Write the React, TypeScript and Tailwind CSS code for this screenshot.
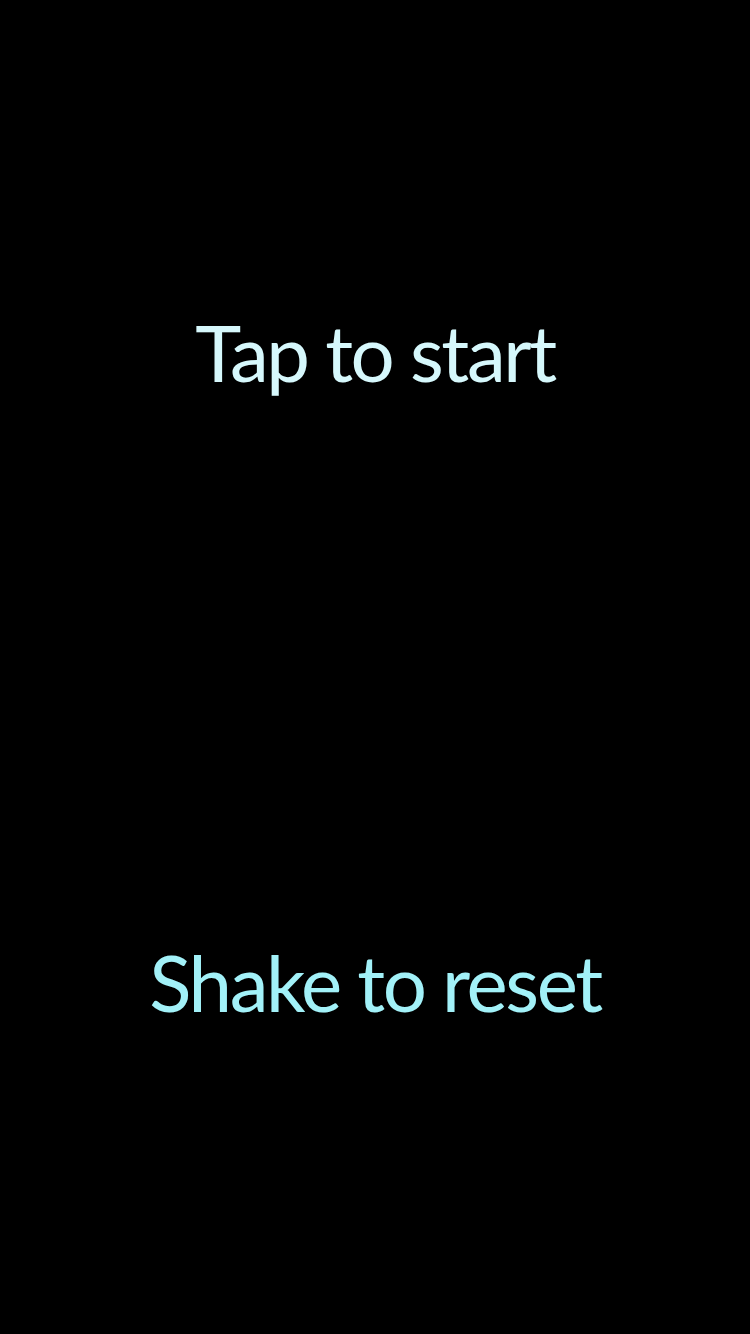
export default function App() {
    return (
        <div className="w-[750px] h-[1334px] bg-black flex flex-col items-center" style={{ fontFamily: "Lato, 'Open Sans', sans-serif" }}>
            <p className="mt-[304px] text-[78px] leading-[96px] text-[#d6f8fc] tracking-[-2.4px]">Tap to start</p>
            <p className="mt-[534px] text-[78px] leading-[96px] text-[#a2f1f8] tracking-[-2.4px]">Shake to reset</p>
        </div>
    );
}
